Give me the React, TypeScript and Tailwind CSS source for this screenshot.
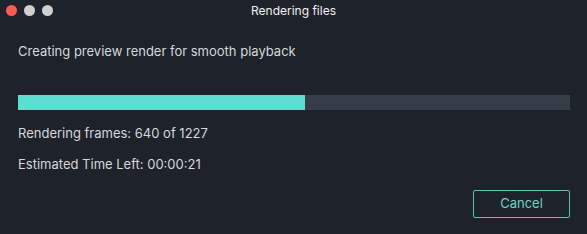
export default function App() {
  const done = 640;
  const total = 1227;
  const pct = (287 / 552) * 100;

  return (
    <div
      className="w-[587px] h-[234px] bg-[#1e222a] text-[#d6d8db] overflow-hidden flex flex-col"
      style={{ fontFamily: 'Inter, "Liberation Sans", Arial, sans-serif' }}
    >
      {/* Title bar */}
      <div className="relative h-[21px] flex items-center justify-center shrink-0">
        <div className="absolute left-[6px] top-[5px] flex gap-[7px]">
          <span className="w-[11px] h-[11px] rounded-full bg-[#fc5a55]" />
          <span className="w-[11px] h-[11px] rounded-full bg-[#cfcfcf]" />
          <span className="w-[11px] h-[11px] rounded-full bg-[#cfcfcf]" />
        </div>
        <span className="text-[12px] text-[#f2f2f2]">Rendering files</span>
      </div>

      {/* Body */}
      <div className="flex flex-col px-[18px] pt-[22px] flex-1">
        <p className="text-[13px] leading-[16px]">Creating preview render for smooth playback</p>

        <div className="mt-[36px] h-[15px] w-[552px] bg-[#353d47]">
          <div className="h-full bg-[#5fddd0]" style={{ width: `${pct}%` }} />
        </div>

        <p className="mt-[15px] text-[13px] leading-[16px]">
          Rendering frames: {done} of {total}
        </p>
        <p className="mt-[15px] text-[13px] leading-[16px]">Estimated Time Left: 00:00:21</p>

        <div className="flex justify-end mt-[18px]">
          <button className="w-[97px] h-[28px] border border-[#5ec5b5] rounded-[2px] text-[13px] text-[#6dd3c4] -mr-[1px]">
            Cancel
          </button>
        </div>
      </div>
    </div>
  );
}
